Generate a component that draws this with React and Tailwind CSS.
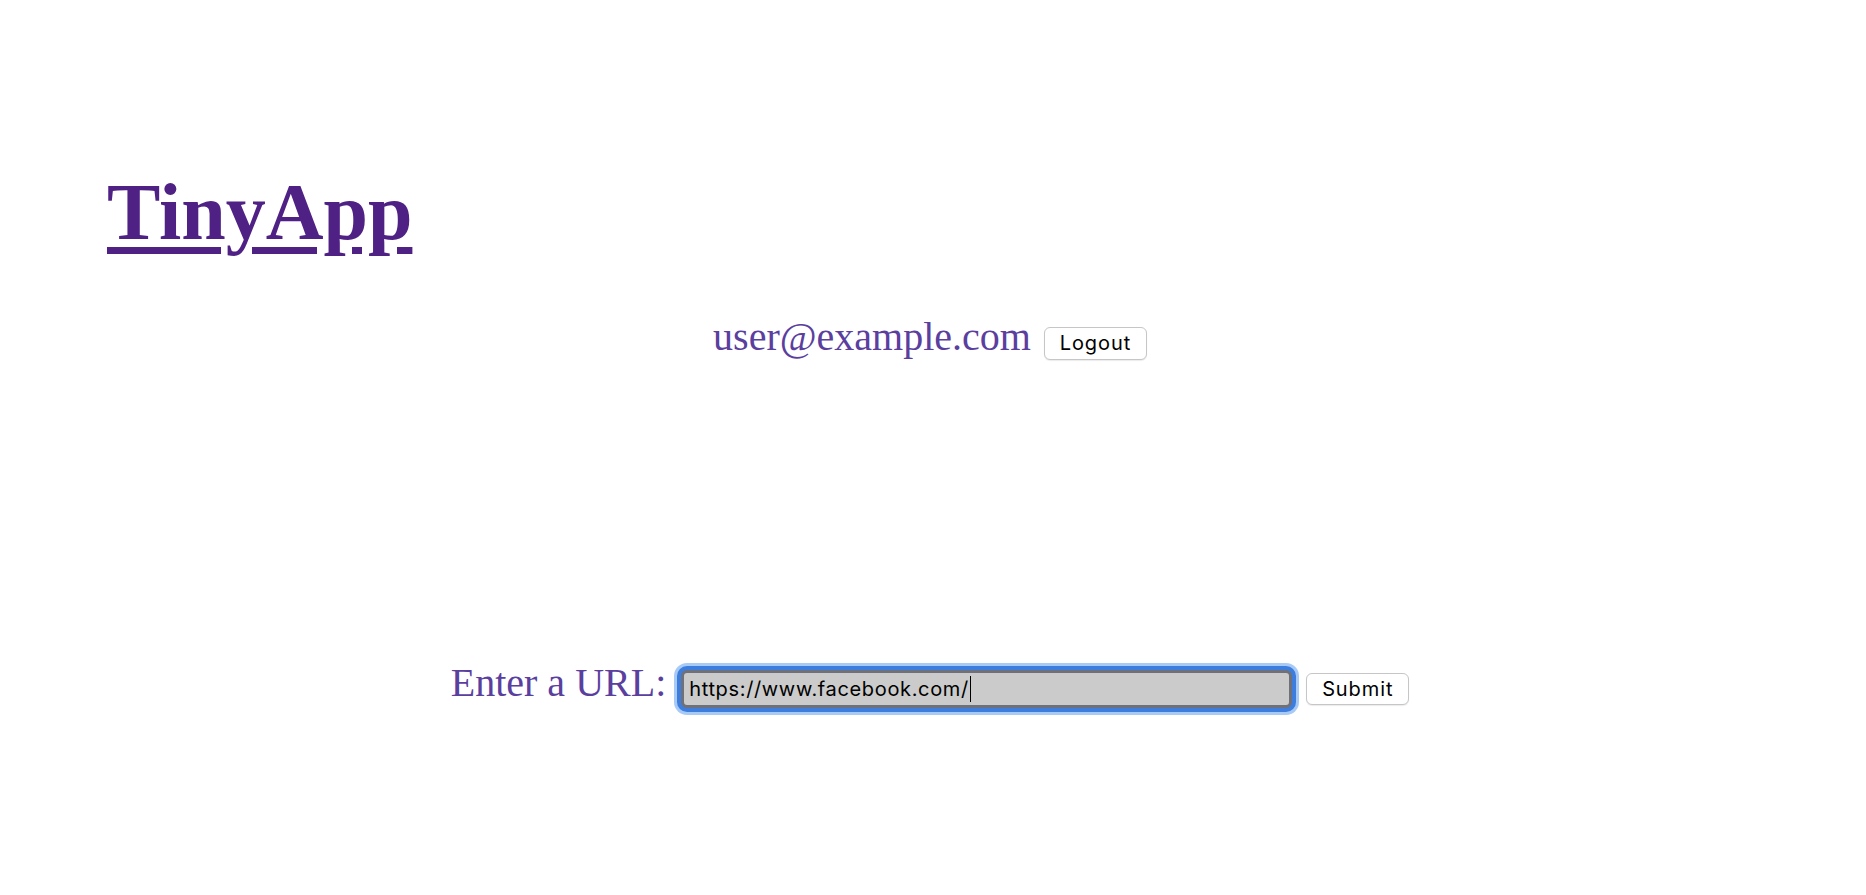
import React from "react";

export default function App() {
  return (
    <div className="min-h-screen w-full bg-white">
      <div className="pt-[172px]">
        <h1 className="pl-[107px] font-['Liberation_Serif',serif] text-[80px] font-bold leading-[80px] text-[#4f2185]">
          <a href="#" className="underline decoration-[7px] underline-offset-[8px]">
            TinyApp
          </a>
        </h1>

        <div className="mt-[61px] flex items-baseline justify-center pr-[6px]">
          <span className="font-['Liberation_Serif',serif] text-[40px] leading-[48px] text-[#5b3f9f]">
            user@example.com
          </span>
          <button className="ml-[13px] flex h-[33px] w-[103px] items-center justify-center rounded-[6px] border border-[#c6c6c6] bg-white font-['Inter',sans-serif] text-[20px] leading-none tracking-[0.9px] text-black shadow-[0_1px_1px_rgba(0,0,0,0.08)]">
            Logout
          </button>
        </div>

        <form
          className="mt-[298px] flex items-baseline justify-center pr-[6px]"
          onSubmit={(e) => e.preventDefault()}
        >
          <label className="font-['Liberation_Serif',serif] text-[40px] leading-[48px] text-[#5b3f9f]">
            Enter a URL:
          </label>
          <div className="ml-[15px] flex h-[38px] w-[611px] items-center rounded-[6px] border-[3px] border-[#6e7179] bg-[#cbcbcb] pl-[5px] font-['Inter',sans-serif] text-[20px] tracking-[0.65px] text-black shadow-[0_0_0_4px_#3d7ddd,0_0_0_7px_#a8caf6]">
            <span>https://www.facebook.com/</span>
            <span className="ml-[1px] h-[26px] w-[1.5px] bg-black" />
          </div>
          <button
            type="submit"
            className="ml-[14px] flex h-[32px] w-[103px] items-center justify-center rounded-[6px] border border-[#c6c6c6] bg-white font-['Inter',sans-serif] text-[20px] leading-none tracking-[0.9px] text-black shadow-[0_1px_1px_rgba(0,0,0,0.08)]"
          >
            Submit
          </button>
        </form>
      </div>
    </div>
  );
}
